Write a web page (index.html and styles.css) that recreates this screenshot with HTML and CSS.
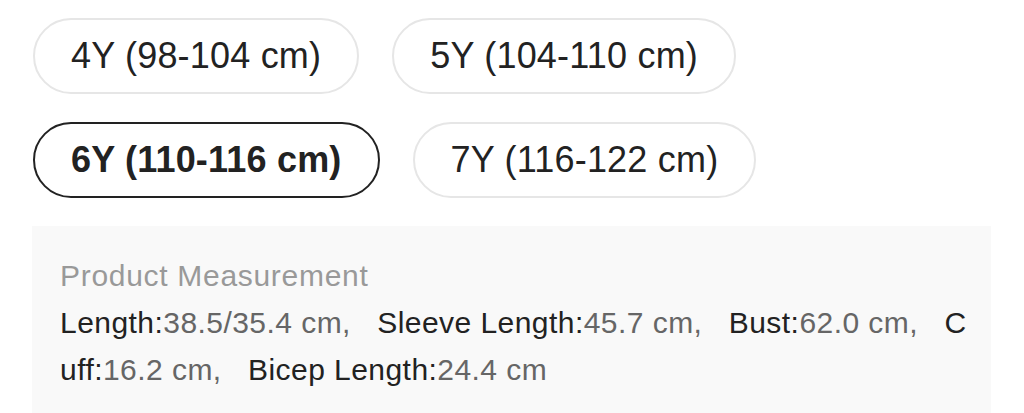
FILE: index.html
```html
<!DOCTYPE html>
<html lang="en">
<head>
<meta charset="utf-8">
<title>Size</title>
<link rel="stylesheet" href="styles.css">
</head>
<body>
<div class="page">
  <div class="sizes">
    <div class="size-row">
      <div class="pill">4Y (98-104 cm)</div>
      <div class="pill">5Y (104-110 cm)</div>
    </div>
    <div class="size-row">
      <div class="pill pill-active">6Y (110-116 cm)</div>
      <div class="pill">7Y (116-122 cm)</div>
    </div>
  </div>
  <div class="measure">
    <div class="measure-title">Product Measurement</div>
    <div class="measure-body"><span class="k">Length:</span><span class="v">38.5/35.4 cm,</span><span class="sp"> </span><span class="k">Sleeve Length:</span><span class="v">45.7 cm,</span><span class="sp"> </span><span class="k">Bust:</span><span class="v">62.0 cm,</span><span class="sp"> </span><span class="k">Cuff:</span><span class="v">16.2 cm,</span><span class="sp"> </span><span class="k">Bicep Length:</span><span class="v">24.4 cm</span></div>
  </div>
</div>
</body>
</html>
```

FILE: styles.css
```css
html, body {
  margin: 0;
  padding: 0;
  background: #ffffff;
}

body {
  font-family: "Liberation Sans", Arial, Helvetica, sans-serif;
  color: #222222;
}

.page {
  padding: 18px 33px 0 32px;
}

.sizes {
  display: flex;
  flex-direction: column;
  gap: 28px;
  padding-left: 1px;
}

.size-row {
  display: flex;
  gap: 33px;
}

.pill {
  box-sizing: border-box;
  height: 76px;
  padding: 0 36px;
  border: 2px solid #e6e6e6;
  border-radius: 38px;
  display: inline-flex;
  align-items: center;
  font-size: 36px;
  line-height: 1;
  letter-spacing: 0.2px;
  color: #222222;
  white-space: nowrap;
}

.pill-active {
  border-color: #222222;
  font-weight: bold;
  padding: 0 36px;
}

.measure {
  margin-top: 28px;
  background: #f9f9f9;
  padding: 26px 24px 20px 28px;
  font-size: 30px;
  line-height: 47px;
  letter-spacing: 0.45px;
}

.measure-title {
  color: #999999;
  letter-spacing: 0.7px;
}

.measure-body {
  word-break: break-all;
}

.k {
  color: #222222;
}

.v {
  color: #666666;
}

.sp {
  white-space: pre;
}

.sp::before {
  content: "  ";
}
```
